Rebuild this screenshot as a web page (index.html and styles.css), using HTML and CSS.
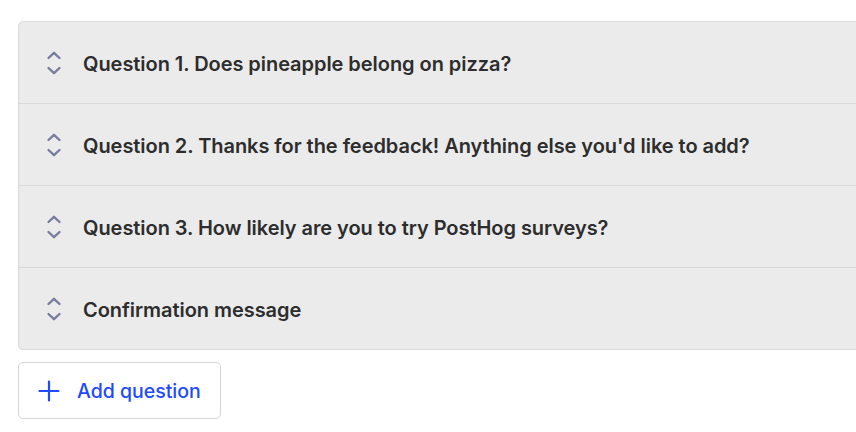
FILE: index.html
```html
<!DOCTYPE html>
<html>
<head>
<meta charset="utf-8">
<link rel="stylesheet" href="styles.css">
</head>
<body>
<div class="page">
  <div class="questions">
    <div class="row">
      <svg class="sort" width="16" height="26" viewBox="0 0 16 26"><path d="M2.5 8 L8 2.8 L13.5 8 M2.5 18 L8 23.2 L13.5 18" fill="none" stroke="#777d9c" stroke-width="2.4" stroke-linecap="round" stroke-linejoin="round"/></svg>
      <span class="title">Question 1. Does pineapple belong on pizza?</span>
    </div>
    <div class="row">
      <svg class="sort" width="16" height="26" viewBox="0 0 16 26"><path d="M2.5 8 L8 2.8 L13.5 8 M2.5 18 L8 23.2 L13.5 18" fill="none" stroke="#777d9c" stroke-width="2.4" stroke-linecap="round" stroke-linejoin="round"/></svg>
      <span class="title">Question 2. Thanks for the feedback! Anything else you'd like to add?</span>
    </div>
    <div class="row">
      <svg class="sort" width="16" height="26" viewBox="0 0 16 26"><path d="M2.5 8 L8 2.8 L13.5 8 M2.5 18 L8 23.2 L13.5 18" fill="none" stroke="#777d9c" stroke-width="2.4" stroke-linecap="round" stroke-linejoin="round"/></svg>
      <span class="title">Question 3. How likely are you to try PostHog surveys?</span>
    </div>
    <div class="row">
      <svg class="sort" width="16" height="26" viewBox="0 0 16 26"><path d="M2.5 8 L8 2.8 L13.5 8 M2.5 18 L8 23.2 L13.5 18" fill="none" stroke="#777d9c" stroke-width="2.4" stroke-linecap="round" stroke-linejoin="round"/></svg>
      <span class="title">Confirmation message</span>
    </div>
  </div>
  <button class="add">
    <svg width="22" height="22" viewBox="0 0 22 22"><path d="M11 1.5 V20.5 M1.5 11 H20.5" stroke="#1d4aff" stroke-width="2.2" stroke-linecap="round"/></svg>
    <span>Add question</span>
  </button>
</div>
</body>
</html>
```
FILE: styles.css
```css
html, body {
  margin: 0;
  padding: 0;
  background: #ffffff;
  overflow: hidden;
}
body {
  font-family: Inter, "Liberation Sans", sans-serif;
}
.page {
  padding: 21px 0 0 18px;
  display: flex;
  flex-direction: column;
  align-items: flex-start;
  gap: 12px;
}
.questions {
  width: 880px;
  background: #ebebeb;
  border: 1px solid #d9d9d9;
  border-radius: 5px;
  box-sizing: border-box;
}
.row {
  height: 81px;
  display: flex;
  align-items: center;
  padding-left: 27px;
  gap: 21px;
  border-bottom: 1px solid #d9d9d9;
}
.row:last-child {
  border-bottom: none;
}
.sort {
  flex: none;
}
.title {
  padding-top: 2px;
  font-size: 20px;
  font-weight: 600;
  color: #2d2d2d;
  letter-spacing: -0.05px;
}
.add {
  display: flex;
  align-items: center;
  gap: 17px;
  height: 57px;
  width: 203px;
  padding: 0 0 0 19px;
  background: #ffffff;
  border: 1px solid #d6d6d6;
  border-radius: 5px;
  font-family: Inter, "Liberation Sans", sans-serif;
  font-size: 19.5px;
  font-weight: 500;
  color: #1d4aff;
  box-sizing: border-box;
}
```
